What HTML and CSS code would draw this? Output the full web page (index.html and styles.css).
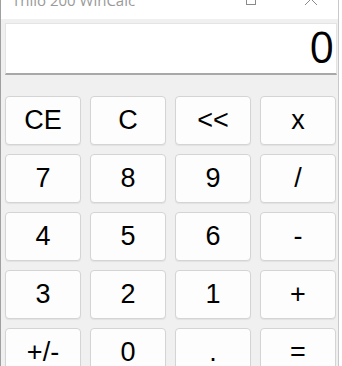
FILE: index.html
```html
<!DOCTYPE html>
<html lang="de">
<head>
    <meta charset="UTF-8">
    <meta name="viewport" content="width=device-width, initial-scale=1.0">
    <title>Thilo 200 WinCalc</title>
    <link rel="stylesheet" href="styles.css">
</head>
<body>
    <div class="window">
        <div class="titlebar">
            <span class="title">Thilo 200 WinCalc</span>
            <span class="title-btn max">
                <svg width="12" height="12" viewBox="0 0 12 12"><rect x="1.5" y="1.5" width="9" height="9" fill="none" stroke="#8a8a8a" stroke-width="1"/></svg>
            </span>
            <span class="title-btn close">
                <svg width="14" height="14" viewBox="0 0 14 14"><path d="M1 1 L13 13 M13 1 L1 13" stroke="#8a8a8a" stroke-width="1" fill="none"/></svg>
            </span>
        </div>

        <div class="client">
            <div class="display" id="display">0</div>

            <div class="keys">
                <button class="key">CE</button>
                <button class="key">C</button>
                <button class="key">&lt;&lt;</button>
                <button class="key">x</button>

                <button class="key">7</button>
                <button class="key">8</button>
                <button class="key">9</button>
                <button class="key">/</button>

                <button class="key">4</button>
                <button class="key">5</button>
                <button class="key">6</button>
                <button class="key">-</button>

                <button class="key">3</button>
                <button class="key">2</button>
                <button class="key">1</button>
                <button class="key">+</button>

                <button class="key">+/-</button>
                <button class="key">0</button>
                <button class="key">.</button>
                <button class="key">=</button>
            </div>
        </div>
    </div>
</body>
</html>
```

FILE: styles.css
```css
* { box-sizing: border-box; }

html, body {
    margin: 0;
    padding: 0;
    background: #ffffff;
    overflow: hidden;
}

.window {
    width: 339px;
    height: 366px;
    border-left: 1px solid #a0a0a0;
    border-right: 1px solid #c8c8c8;
    background: #f0f0f0;
    overflow: hidden;
}

.titlebar {
    height: 19px;
    background: #ffffff;
    display: flex;
    align-items: flex-end;
    overflow: hidden;
    font-family: "Open Sans", "Noto Sans", sans-serif;
}

.title {
    font-size: 15px;
    line-height: 15px;
    color: #9a9a9a;
    margin: 0 0 11px 11px;
    white-space: nowrap;
    flex: 1;
}

.title-btn {
    display: flex;
    align-items: flex-end;
}

.title-btn.max {
    margin: 0 0 13px 0;
}

.title-btn.close {
    margin: 0 20px 13px 47px;
}

.client {
    padding: 4px 0 0 4px;
}

.display {
    height: 52px;
    margin-right: 1px;
    background: #ffffff;
    border: 1px solid #e4e4e4;
    border-bottom: 2px solid #a8a8a8;
    text-align: right;
    font-family: "Open Sans", "Noto Sans", sans-serif;
    font-size: 43px;
    line-height: 46px;
    padding-right: 2px;
    color: #000000;
}

.keys {
    margin-top: 21px;
    display: grid;
    grid-template-columns: repeat(4, 76px);
    grid-auto-rows: 49px;
    gap: 9px;
}

.key {
    background: #fdfdfd;
    border: 1px solid #d4d4d4;
    border-radius: 4px;
    box-shadow: 0 1px 1px rgba(0,0,0,0.06);
    font-family: "Liberation Sans", Arial, sans-serif;
    font-size: 27px;
    color: #000000;
    padding: 0;
    cursor: pointer;
}

.key:hover {
    background: #e5f1fb;
    border-color: #0078d7;
}
```
